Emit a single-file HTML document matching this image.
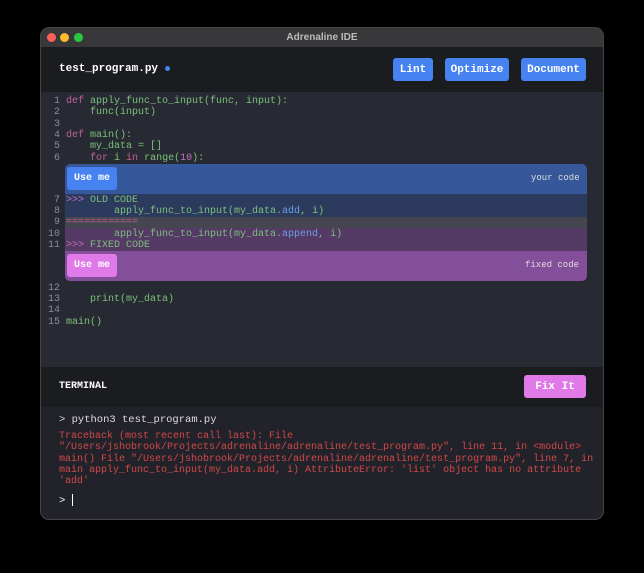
<!DOCTYPE html>
<html><head><meta charset="utf-8"><style>
*{margin:0;padding:0;box-sizing:border-box}
body{width:644px;height:573px;background:#000;position:relative;overflow:hidden;font-family:"Liberation Mono",monospace}
.win{position:absolute;left:40px;top:27px;width:564px;height:493px;border-radius:9px;overflow:hidden;background:#22232a;border:1px solid #444}
.tb{position:absolute;left:0;top:0;width:100%;height:19px;background:#38383a;color:#bbb;font:bold 10px "Liberation Sans",sans-serif;text-align:center;line-height:19px}
.dot{position:absolute;top:5px;width:9px;height:9px;border-radius:50%}
.hd{position:absolute;left:0;top:19px;width:100%;height:45px;background:#1b1c20}
.btn{position:absolute;background:#4682f0;color:#fff;font-weight:bold;font-size:11px;font-family:"Liberation Mono",monospace;border-radius:3px;display:flex;align-items:center;justify-content:center;height:23px}
.ed{position:absolute;left:0;top:64px;width:100%;height:275px;background:#282a33}
.l{position:absolute;left:0;font-size:10px;line-height:11px;white-space:pre;color:#7ac17a}
.n{position:absolute;width:19px;text-align:right;color:#8a8c94}
.k{color:#c0609a}.b{color:#6aa0e0}.p{color:#c070c0}
.term{position:absolute;left:0;top:339px;width:100%;height:40px;background:#1b1c20}
</style></head><body>
<div class="win">
<div class="tb">Adrenaline IDE
<span class="dot" style="left:6px;background:#fe5f57"></span><span class="dot" style="left:19px;background:#febc2e"></span><span class="dot" style="left:33px;background:#28c840"></span></div>
<div class="hd">
<div style="position:absolute;left:18px;top:16px;font-size:11px;color:#fff;font-weight:bold">test_program.py <span style="display:inline-block;width:5px;height:5px;border-radius:50%;background:#4682f0;vertical-align:middle"></span></div>
<div class="btn" style="left:352px;top:11px;width:40px">Lint</div>
<div class="btn" style="left:404px;top:11px;width:64px">Optimize</div>
<div class="btn" style="left:480px;top:11px;width:65px">Document</div>
</div>
<div class="ed">
<div style="position:absolute;left:24px;top:72px;width:522px;height:30px;background:#36589a;border-radius:5px 5px 0 0"></div>
<div class="btn" style="left:26px;top:75px;width:50px;font-size:10px">Use me</div>
<div style="position:absolute;left:490px;top:81px;font-size:9px;color:#ddd">your code</div>
<div style="position:absolute;left:24px;top:102px;width:522px;height:23px;background:#2c3a5e"></div>
<div style="position:absolute;left:24px;top:125px;width:522px;height:11px;background:#45464f"></div>
<div style="position:absolute;left:24px;top:136px;width:522px;height:23px;background:#553a66"></div>
<div style="position:absolute;left:24px;top:159px;width:522px;height:30px;background:#834e9a;border-radius:0 0 5px 5px"></div>
<div class="btn" style="left:26px;top:162px;width:50px;font-size:10px;background:#e07ae8">Use me</div>
<div style="position:absolute;left:484px;top:168px;font-size:9px;color:#ddd">fixed code</div>
<div class="l" style="top:4px"><span class="n">1</span><span style="margin-left:25px"><span class="k">def</span> apply_func_to_input(func, input):</span></div>
<div class="l" style="top:15px"><span class="n">2</span><span style="margin-left:25px">    func(input)</span></div>
<div class="l" style="top:27px"><span class="n">3</span></div>
<div class="l" style="top:38px"><span class="n">4</span><span style="margin-left:25px"><span class="k">def</span> main():</span></div>
<div class="l" style="top:49px"><span class="n">5</span><span style="margin-left:25px">    my_data = []</span></div>
<div class="l" style="top:61px"><span class="n">6</span><span style="margin-left:25px">    <span class="k">for</span> i <span class="k">in</span> range(<span class="p">10</span>):</span></div>
<div class="l" style="top:103px"><span class="n">7</span><span style="margin-left:25px"><span class="p">&gt;&gt;&gt;</span> OLD CODE</span></div>
<div class="l" style="top:114px"><span class="n">8</span><span style="margin-left:25px">        apply_func_to_input(my_data.<span class="b">add</span>, i)</span></div>
<div class="l" style="top:125px"><span class="n">9</span><span style="margin-left:25px" class="k">============</span></div>
<div class="l" style="top:137px"><span class="n">10</span><span style="margin-left:25px">        apply_func_to_input(my_data.<span class="b">append</span>, i)</span></div>
<div class="l" style="top:148px"><span class="n">11</span><span style="margin-left:25px"><span class="p">&gt;&gt;&gt;</span> FIXED CODE</span></div>
<div class="l" style="top:191px"><span class="n">12</span></div>
<div class="l" style="top:202px"><span class="n">13</span><span style="margin-left:25px">    print(my_data)</span></div>
<div class="l" style="top:213px"><span class="n">14</span></div>
<div class="l" style="top:225px"><span class="n">15</span><span style="margin-left:25px">main()</span></div>
</div>
<div class="term">
<div style="position:absolute;left:18px;top:14px;font-size:10px;color:#fff;font-weight:bold">TERMINAL</div>
<div class="btn" style="left:483px;top:8px;width:62px;background:#e07ae8">Fix It</div>
</div>
<div style="position:absolute;left:18px;top:386px;font-size:10.5px;color:#ddd">&gt; python3 test_program.py</div>
<div style="position:absolute;left:18px;top:403px;width:545px;font-size:10px;line-height:11.3px;color:#d04848">Traceback (most recent call last): File "/Users/jshobrook/Projects/adrenaline/adrenaline/test_program.py", line 11, in &lt;module&gt; main() File "/Users/jshobrook/Projects/adrenaline/adrenaline/test_program.py", line 7, in main apply_func_to_input(my_data.add, i) AttributeError: 'list' object has no attribute 'add'</div>
<div style="position:absolute;left:18px;top:466px;font-size:10.5px;color:#fff">&gt; <span style="display:inline-block;width:1px;height:12px;background:#fff;vertical-align:middle"></span></div>
</div>
</body></html>
